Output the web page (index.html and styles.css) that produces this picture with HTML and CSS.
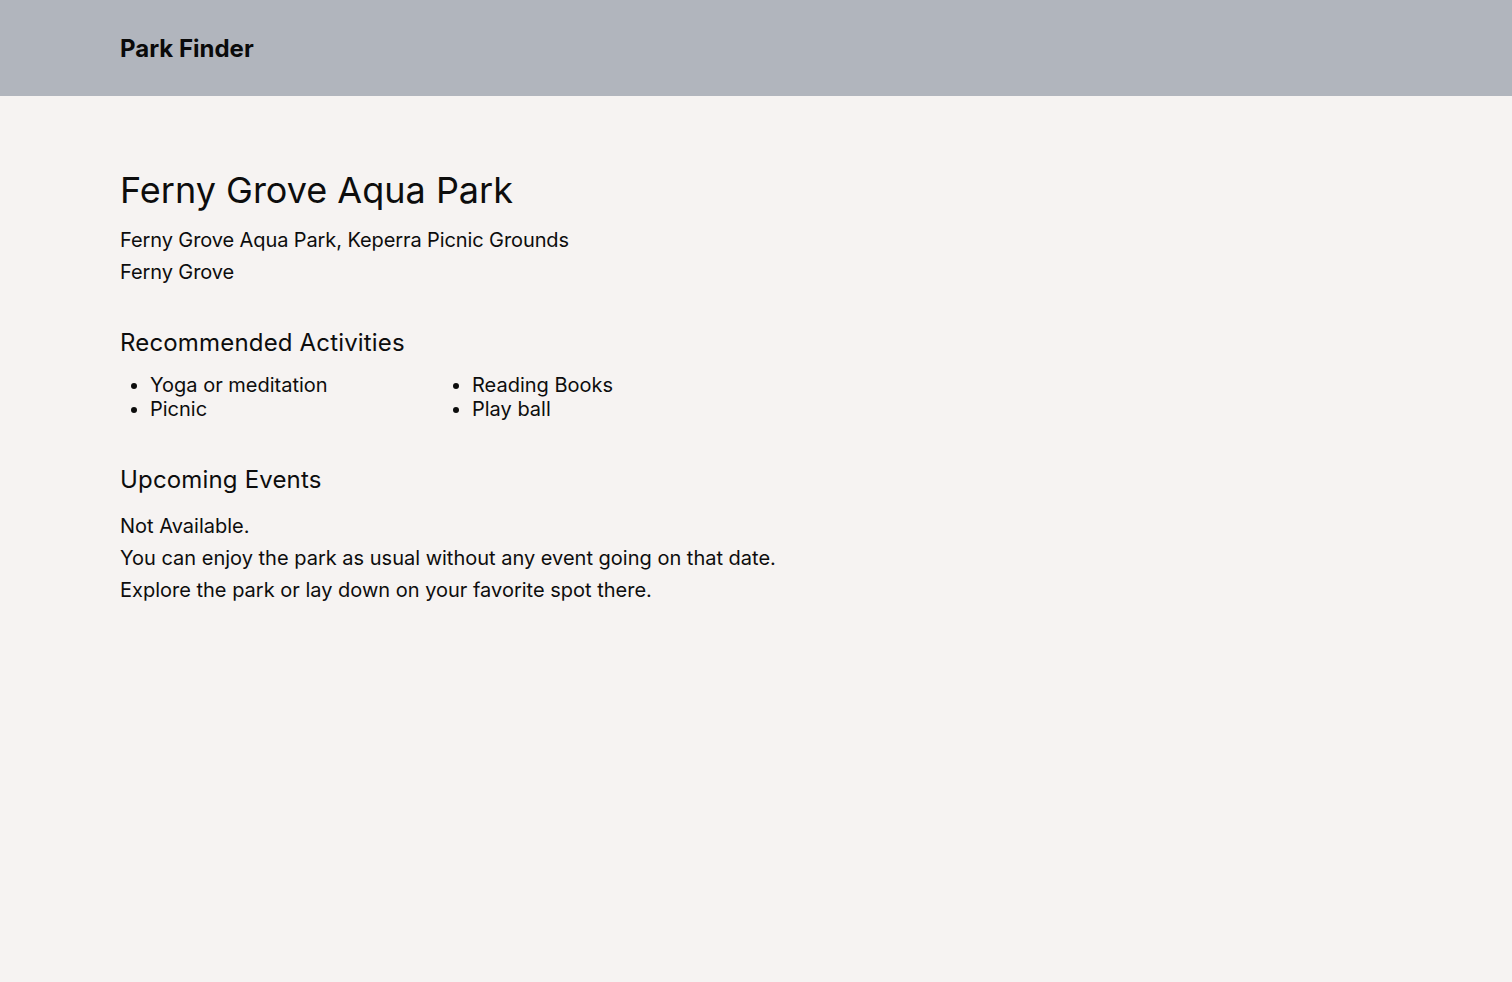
FILE: index.html
```html
<!DOCTYPE html>
<html lang="en">
<head>
<meta charset="utf-8">
<title>Park Finder</title>
<link rel="stylesheet" href="styles.css">
</head>
<body>
<header class="topbar">
  <div class="brand">Park Finder</div>
</header>
<main class="content">
  <h1 class="park-title">Ferny Grove Aqua Park</h1>
  <div class="address">
    <p>Ferny Grove Aqua Park, Keperra Picnic Grounds</p>
    <p>Ferny Grove</p>
  </div>
  <section class="activities">
    <h2 class="section-title">Recommended Activities</h2>
    <div class="activity-grid">
      <ul class="activity-list">
        <li>Yoga or meditation</li>
        <li>Picnic</li>
      </ul>
      <ul class="activity-list">
        <li>Reading Books</li>
        <li>Play ball</li>
      </ul>
    </div>
  </section>
  <section class="events">
    <h2 class="section-title">Upcoming Events</h2>
    <div class="events-text">
      <p>Not Available.</p>
      <p>You can enjoy the park as usual without any event going on that date.</p>
      <p>Explore the park or lay down on your favorite spot there.</p>
    </div>
  </section>
</main>
</body>
</html>
```

FILE: styles.css
```css
* { box-sizing: border-box; }
html, body {
  margin: 0;
  padding: 0;
}
body {
  background: #f6f3f2;
  color: #0d0d0d;
  font-family: Inter, "Noto Sans", sans-serif;
  min-height: 100vh;
}
.topbar {
  height: 96px;
  background: #b1b5bd;
  display: flex;
  align-items: center;
  padding: 0 120px;
}
.brand {
  font-size: 24px;
  font-weight: 700;
  color: #0a0a0a;
}
.content {
  padding: 0 120px;
}
.park-title {
  margin: 72px 0 0;
  font-size: 36px;
  line-height: 44px;
  font-weight: 400;
}
.address {
  margin-top: 12px;
  letter-spacing: -0.1px;
}
.address p,
.events-text p {
  margin: 0;
  font-size: 20px;
  line-height: 32px;
}
.activities {
  margin-top: 39px;
}
.section-title {
  margin: 0;
  font-size: 24px;
  line-height: 32px;
  font-weight: 400;
  letter-spacing: 0.17px;
}
.activity-grid {
  margin-top: 14px;
  display: grid;
  grid-template-columns: 322px 322px;
}
.activity-list {
  margin: 0;
  padding-left: 30px;
  font-size: 20px;
  line-height: 24px;
}
.events {
  margin-top: 43px;
}
.events-text {
  margin-top: 14px;
}
```
